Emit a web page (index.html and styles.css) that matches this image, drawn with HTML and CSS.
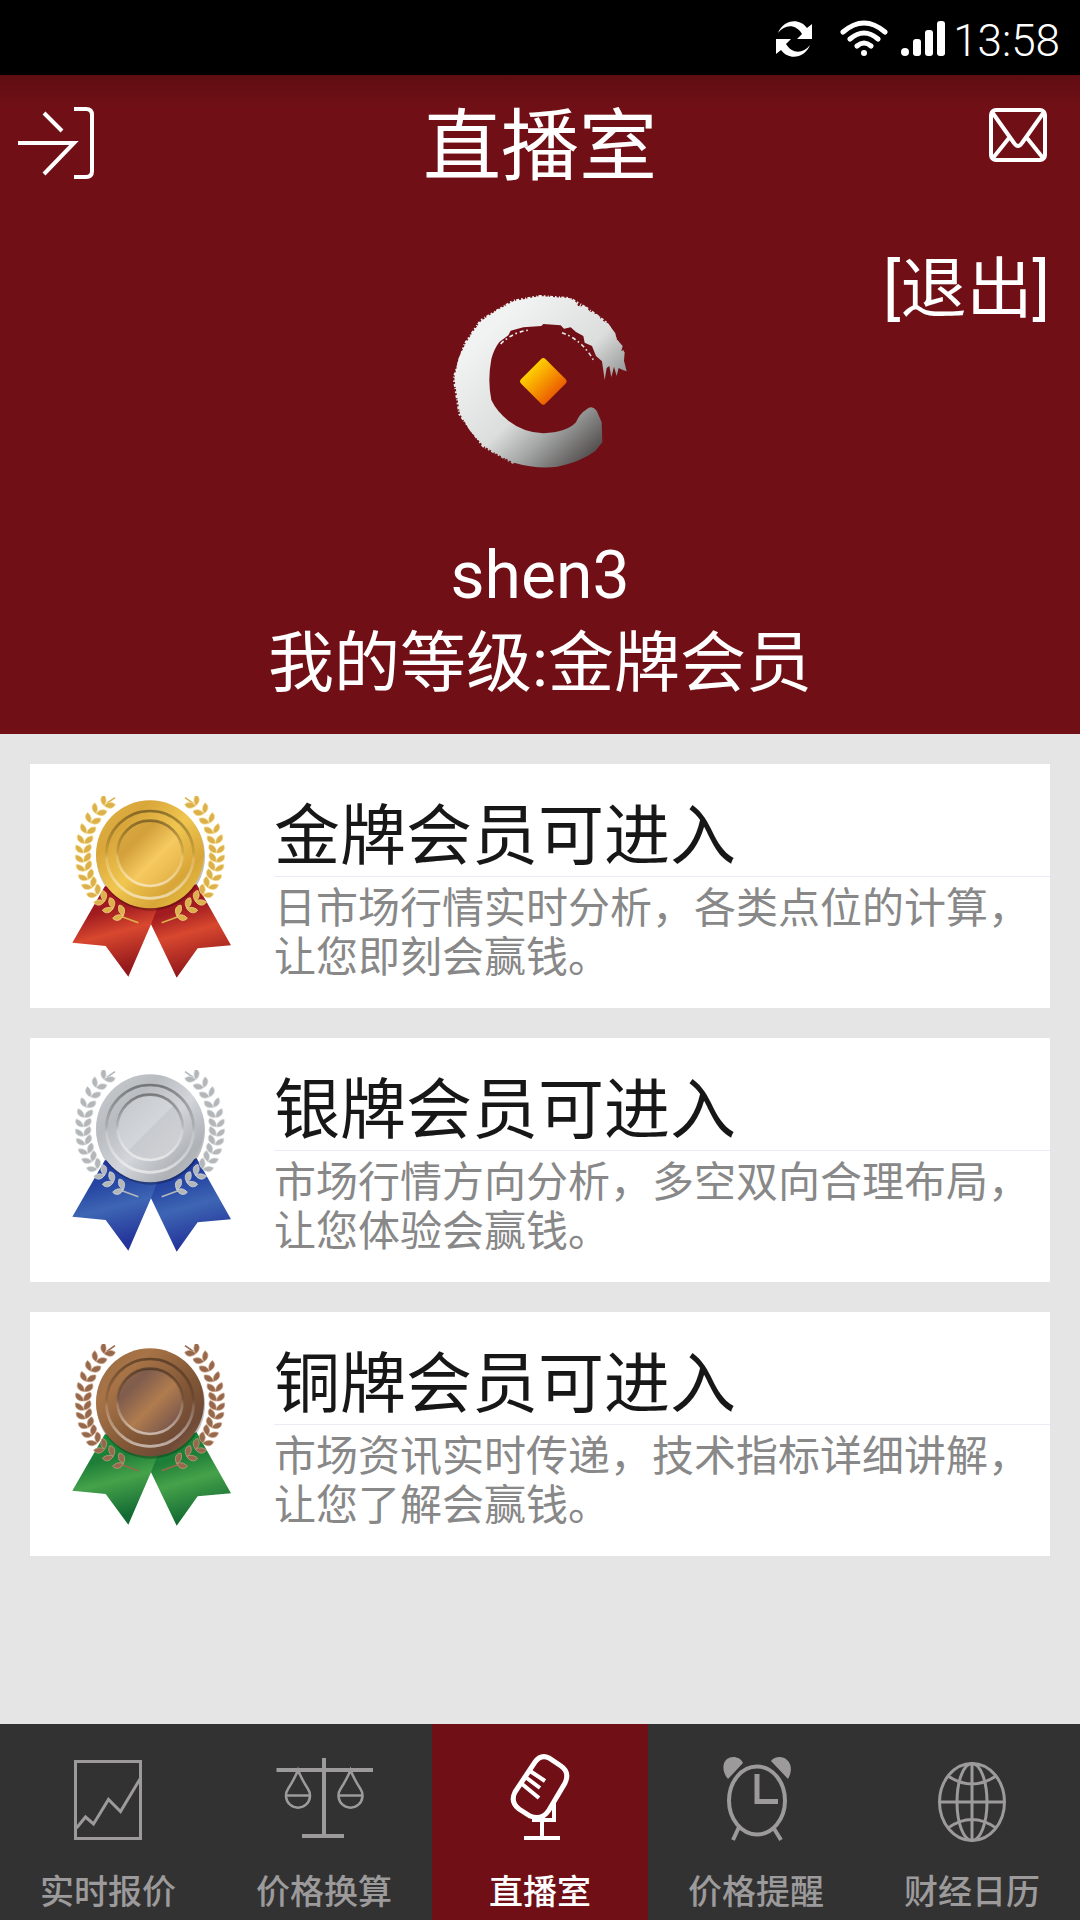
FILE: index.html
```html
<!DOCTYPE html>
<html lang="zh-CN">
<head>
    <meta charset="UTF-8">
    <meta name="viewport" content="width=device-width, initial-scale=1">
    <title>直播室</title>
    <link rel="stylesheet" href="styles.css">
</head>
<body>
    <!-- shared medal drawing, coloured per card -->
    <svg class="defs" width="0" height="0" aria-hidden="true">
        <defs>
            <linearGradient id="gold" x1="0" y1="0" x2="1" y2="1">
                <stop offset="0" stop-color="#e0b548"/><stop offset=".25" stop-color="#d9a63a"/>
                <stop offset=".5" stop-color="#f0c650"/><stop offset=".75" stop-color="#d8a638"/><stop offset="1" stop-color="#eccb45"/>
            </linearGradient>
            <linearGradient id="gold-face" x1="0" y1="0" x2="1" y2="1">
                <stop offset="0" stop-color="#dcae42"/><stop offset=".3" stop-color="#d3a03b"/>
                <stop offset=".58" stop-color="#f6ca60"/><stop offset="1" stop-color="#dca93d"/>
            </linearGradient>
            <linearGradient id="silver" x1="0" y1="0" x2="1" y2="1">
                <stop offset="0" stop-color="#c9cccf"/><stop offset=".3" stop-color="#b9bdc1"/>
                <stop offset=".55" stop-color="#d2d5d9"/><stop offset=".8" stop-color="#aeb2b6"/><stop offset="1" stop-color="#c6c9cc"/>
            </linearGradient>
            <linearGradient id="silver-face" x1="0" y1="0" x2="1" y2="1">
                <stop offset="0" stop-color="#c2c5c9"/><stop offset=".5" stop-color="#d3d6da"/>
                <stop offset=".52" stop-color="#c8cbcf"/><stop offset="1" stop-color="#d0d2d6"/>
            </linearGradient>
            <linearGradient id="bronze" x1="0" y1="0" x2="1" y2="1">
                <stop offset="0" stop-color="#94683f"/><stop offset=".25" stop-color="#a87447"/>
                <stop offset=".6" stop-color="#805636"/><stop offset=".8" stop-color="#6f4a36"/><stop offset="1" stop-color="#a06f45"/>
            </linearGradient>
            <linearGradient id="bronze-face" x1="0" y1="0" x2="1" y2="1">
                <stop offset="0" stop-color="#946843"/><stop offset=".25" stop-color="#7f5c4d"/>
                <stop offset=".55" stop-color="#b07c4e"/><stop offset=".85" stop-color="#7d594c"/><stop offset="1" stop-color="#8c6042"/>
            </linearGradient>
            <linearGradient id="red" x1="0" y1="0" x2=".25" y2="1">
                <stop offset="0" stop-color="#a80f22"/><stop offset=".35" stop-color="#a11c20"/>
                <stop offset=".6" stop-color="#d8482f"/><stop offset="1" stop-color="#94181c"/>
            </linearGradient>
            <linearGradient id="blue" x1="0" y1="0" x2=".25" y2="1">
                <stop offset="0" stop-color="#1c2c9c"/><stop offset=".35" stop-color="#2848a4"/>
                <stop offset=".6" stop-color="#3e66b4"/><stop offset="1" stop-color="#24349a"/>
            </linearGradient>
            <linearGradient id="green" x1="0" y1="0" x2=".25" y2="1">
                <stop offset="0" stop-color="#12953c"/><stop offset=".35" stop-color="#1d7d37"/>
                <stop offset=".6" stop-color="#46a24a"/><stop offset="1" stop-color="#136a32"/>
            </linearGradient>
            <linearGradient id="ring-line" x1="0" y1="0" x2="0" y2="1">
                <stop offset="0" stop-color="#000" stop-opacity=".38"/><stop offset=".45" stop-color="#000" stop-opacity=".1"/>
                <stop offset=".55" stop-color="#fff" stop-opacity=".15"/><stop offset="1" stop-color="#fff" stop-opacity=".55"/>
            </linearGradient>
            <g id="leaf">
                <path d="M0 11C-4-1-10-9-25-11C-29 4-17 14 0 11Z"/>
                <path d="M0 11C-3-4 5-13 18-17C27-4 17 9 0 11Z"/>
            </g>
            <g id="branch">
                <path class="stem" d="M199 380L150 362M104 22L129 5"/>
                <use href="#leaf" transform="translate(105 22) rotate(48)"/>
                <use href="#leaf" transform="translate(80 45) rotate(42)"/>
                <use href="#leaf" transform="translate(62 72) rotate(32)"/>
                <use href="#leaf" transform="translate(48 102) rotate(22)"/>
                <use href="#leaf" transform="translate(40 132) rotate(13)"/>
                <use href="#leaf" transform="translate(36 160) rotate(5)"/>
                <use href="#leaf" transform="translate(36 187) rotate(-2)"/>
                <use href="#leaf" transform="translate(39 213) rotate(-8)"/>
                <use href="#leaf" transform="translate(46 240) rotate(-17)"/>
                <use href="#leaf" transform="translate(56 265) rotate(-26)"/>
                <use href="#leaf" transform="translate(70 288) rotate(-35)"/>
                <use href="#leaf" transform="translate(90 308) rotate(-46)"/>
                <use href="#leaf" transform="translate(115 330) rotate(-52)"/>
                <use href="#leaf" transform="translate(145 352) rotate(-56)"/>
            </g>
            <symbol id="medal" viewBox="0 0 480 549">
                <path class="ribbon" d="M374 265L477 448L377 457L314 545L237 385L225 300Z"/>
                <path class="ribbon" d="M99 270L1 440L101 450L169 542L237 385L262 320Z"/>
                <circle class="shade" cx="236" cy="181" r="163"/>
                <circle class="disc" cx="234" cy="175" r="162"/>
                <circle class="groove" cx="234" cy="176" r="131"/>
                <circle class="face" cx="234" cy="172" r="98"/>
                <circle class="groove" cx="234" cy="172" r="98"/>
                <g class="laurel">
                    <use href="#branch"/>
                    <use href="#branch" transform="translate(468 0) scale(-1 1)"/>
                </g>
            </symbol>
        </defs>
    </svg>

    <div class="status-bar">
        <svg width="38" height="36" viewBox="0 0 38 36" fill="#fff">
            <path d="M3 12C8-1 24-4 32 7L37 3V18H22L27 13C21 3 10 3 3 12Z"/>
            <path d="M35 24C30 37 14 40 6 29L1 33V18H16L11 23C17 33 28 33 35 24Z"/>
        </svg>
        <svg class="wifi" width="48" height="37" viewBox="0 0 48 37" fill="none" stroke="#fff" stroke-width="5" stroke-linecap="round">
            <path d="M3 12Q24-6 45 12M10 19Q24 7 38 19M17 26Q24 20 31 26"/>
            <circle cx="24" cy="33" r="3" fill="#fff" stroke="none"/>
        </svg>
        <svg class="signal" width="44" height="36" viewBox="0 0 44 36" fill="#fff">
            <circle cx="4" cy="31" r="4"/>
            <rect x="12" y="18" width="8" height="17" rx="3"/>
            <rect x="24" y="9" width="8" height="26" rx="3"/>
            <rect x="36" y="0" width="8" height="35" rx="3"/>
        </svg>
        <span class="time">13:58</span>
    </div>

    <header>
        <div class="title-bar">
            <button class="icon-btn" type="button" aria-label="返回">
                <svg width="76" height="72" viewBox="0 0 76 72" fill="none" stroke="#fff" stroke-width="4">
                    <path d="M0 36H56L26 67M26 6L44 24M56 2H68Q74 2 74 8V64Q74 70 68 70H56"/>
                </svg>
            </button>
            <h1>直播室</h1>
            <button class="icon-btn mail" type="button" aria-label="消息">
                <svg width="58" height="56" viewBox="0 0 58 56" fill="none" stroke="#fff" stroke-width="4">
                    <rect x="2" y="3" width="54" height="50" rx="5"/>
                    <path d="M3 5L25 36Q29 42 33 36L55 5M4 51L20 31M54 51L38 31"/>
                </svg>
            </button>
        </div>

        <div class="profile">
            <svg class="logo" width="176" height="174" viewBox="36 40 528 522">
                <defs>
                    <linearGradient id="ink" gradientUnits="userSpaceOnUse" x1="150" y1="150" x2="480" y2="500">
                        <stop offset="0" stop-color="#f1f3f3"/><stop offset=".5" stop-color="#dcdddd"/>
                        <stop offset=".72" stop-color="#a3a6a5"/><stop offset="1" stop-color="#544f4f"/>
                    </linearGradient>
                    <linearGradient id="coin" x1="0" y1=".5" x2="1" y2=".5">
                        <stop offset="0" stop-color="#ffcf00"/><stop offset="1" stop-color="#ec5f00"/>
                    </linearGradient>
                </defs>
                <path fill="url(#ink)" d="M560 272L552 240L554 214L544 210L548 196L530 176L526 158L504 128L484 118L476 104L448 92L440 78L414 76L408 64L388 52L346 50L300 46L270 52L220 62L172 88L124 120L100 152L76 190L56 232L43 292L50 340L60 400L90 450L130 495L172 521L222 546Q290 566 352 558Q420 545 465 512L487 485L485 425L470 390Q455 372 440 386Q418 400 408 425Q380 455 310 458Q250 455 205 420Q170 392 154 358Q142 300 154 235Q162 205 178 184L205 164L212 150L250 140L304 136L310 130L362 134L372 144L392 140L408 154L430 166L434 186L456 196L468 226L486 242L494 298L500 262L508 256L514 290L522 258L530 286L536 262L548 268Z"/>
                <path fill="none" stroke="url(#ink)" stroke-width="10" stroke-dasharray="5 6 9 4 3 7" d="M548 215L500 128L440 84L388 54L300 48L220 62L124 120L76 190L43 292L60 400L130 495L222 546"/>
                <path fill="none" stroke="url(#ink)" stroke-width="5" stroke-dasharray="12 8 5 9" d="M182 190Q220 152 272 148M366 156Q430 180 462 242"/>
                <rect x="258" y="250" width="104" height="104" rx="10" fill="url(#coin)" transform="rotate(45 310 302)"/>
            </svg>
            <button class="logout" type="button">[退出]</button>
            <p class="name">shen3</p>
            <p class="level">我的等级:金牌会员</p>
        </div>
    </header>

    <main>
        <a class="card gold" href="#gold-room">
            <svg class="medal" width="160" height="183"><use href="#medal"/></svg>
            <div class="card-text">
                <h2>金牌会员可进入</h2>
                <p>日市场行情实时分析，各类点位的计算，让您即刻会赢钱。</p>
            </div>
        </a>
        <a class="card silver" href="#silver-room">
            <svg class="medal" width="160" height="183"><use href="#medal"/></svg>
            <div class="card-text">
                <h2>银牌会员可进入</h2>
                <p>市场行情方向分析，多空双向合理布局，让您体验会赢钱。</p>
            </div>
        </a>
        <a class="card bronze" href="#bronze-room">
            <svg class="medal" width="160" height="183"><use href="#medal"/></svg>
            <div class="card-text">
                <h2>铜牌会员可进入</h2>
                <p>市场资讯实时传递，技术指标详细讲解，让您了解会赢钱。</p>
            </div>
        </a>
    </main>

    <nav>
        <a href="#quotes">
            <svg width="110" height="90" viewBox="0 0 110 90" stroke-width="3">
                <rect x="22.5" y="9.5" width="65" height="77"/>
                <path d="M23.5 76L32.5 65L40.5 72L55.5 47.5L67.5 59.5L87 27"/>
            </svg>
            <span>实时报价</span>
        </a>
        <a href="#convert">
            <svg width="110" height="90" viewBox="0 0 110 90" stroke-width="4">
                <path d="M7.5 18H104M55 6V84M33 84H75"/>
                <path stroke-width="2.5" d="M29 18Q26 26 19 37A12 12 0 1 0 39 37Q32 26 29 18ZM17 43.5H41M81.5 18Q78.5 26 71.5 37A12 12 0 1 0 91.5 37Q84.5 26 81.5 18ZM69.5 43.5H93.5"/>
            </svg>
            <span>价格换算</span>
        </a>
        <a class="active" href="#live">
            <svg width="110" height="90" viewBox="0 0 110 90" stroke-width="4">
                <path stroke-width="5" d="M50 10Q56 2 64 6L76 14Q85 20 80 31L64 58Q57 69 45 64L34 57Q25 50 30 40Z"/>
                <path d="M45 19L60 29M41 25.5L55 36M37 32L54 46M69 50V68H47M57 68V86M39 86H75"/>
            </svg>
            <span>直播室</span>
        </a>
        <a href="#alerts">
            <svg width="110" height="90" viewBox="0 0 110 90" stroke-width="4">
                <ellipse cx="56" cy="48.5" rx="28" ry="34"/>
                <path stroke-width="5" d="M56 22V49.5H77"/>
                <path d="M38 75L32 88M72 75L80 88"/>
                <path fill="currentColor" stroke="none" d="M27 27C21 20 21 11 26 7C31 3 40 5 42 11ZM87 27C91 20 91 12 86 8C81 3 73 5 70 9Z"/>
            </svg>
            <span>价格提醒</span>
        </a>
        <a href="#calendar">
            <svg width="110" height="90" viewBox="0 0 110 90" stroke-width="3">
                <ellipse cx="55" cy="50" rx="32.5" ry="38.5"/>
                <ellipse cx="55" cy="50" rx="15" ry="38.5"/>
                <path d="M55 11V89M22 50H88M31 24Q55 40 79 24M31 76Q55 59 79 76"/>
            </svg>
            <span>财经日历</span>
        </a>
    </nav>
</body>
</html>
```
FILE: styles.css
```css
* {
    box-sizing: border-box;
}

body {
    margin: 0;
    min-height: 100vh;
    display: flex;
    flex-direction: column;
    background: #e5e5e5;
    font-family: Roboto, "Noto Sans CJK SC", sans-serif;
}

h1, h2, p {
    margin: 0;
    font-weight: normal;
}

a {
    color: inherit;
    text-decoration: none;
}

button {
    padding: 0;
    border: 0;
    background: none;
    color: inherit;
    font-family: inherit;
    cursor: pointer;
}

svg {
    display: block;
    flex: none;
}

.defs {
    position: absolute;
}

/* status bar */
.status-bar {
    display: flex;
    justify-content: flex-end;
    align-items: center;
    height: 75px;
    padding: 2px 20px 0 0;
    background: #000;
    color: #fff;
}

.wifi {
    margin: 0 13px 0 27px;
}

.signal {
    margin-right: 8px;
}

.time {
    padding-top: 4px;
    font-size: 44px;
    font-weight: 300;
    line-height: 48px;
}

/* header */
header {
    background: linear-gradient(#5f0d12, #701016 32px);
    color: #fff;
    padding-bottom: 26px;
}

.title-bar {
    display: grid;
    grid-template-columns: 1fr auto 1fr;
    align-items: start;
    padding: 32px 18px 0;
}

.title-bar h1 {
    font-size: 78px;
    line-height: 82px;
}

.icon-btn {
    justify-self: start;
}

.mail {
    justify-self: end;
    margin-right: 15px;
}

.profile {
    display: grid;
    grid-template-columns: 1fr auto 1fr;
    padding: 61px 30px 0;
    font-size: 66px;
    line-height: 88px;
    text-align: center;
}

.logo {
    grid-column: 2;
    justify-self: center;
    margin: 44px 0 64px;
}

.logout {
    grid-column: 3;
    justify-self: end;
    align-self: start;
    font-size: 66px;
    line-height: 80px;
}

.name, .level {
    grid-column: 1 / -1;
}

/* room cards */
main {
    flex: 1;
    display: flex;
    flex-direction: column;
    gap: 30px;
    padding: 30px;
}

.card {
    display: flex;
    align-items: flex-start;
    gap: 42px;
    padding: 32px 0 26px 42px;
    background: #fff;
}

.card-text {
    flex: 1;
}

.card h2 {
    padding-top: 2px;
    color: #171717;
    font-size: 66px;
    line-height: 78px;
    border-bottom: 1px solid #ececf8;
}

.card p {
    padding-top: 7px;
    color: #888;
    font-size: 42px;
    line-height: 49px;
}

.gold {
    --disc: url(#gold);
    --face: url(#gold-face);
    --ribbon: url(#red);
    --leaf: #dcb04a;
    --vein: #f3dc8a;
}

.silver {
    --disc: url(#silver);
    --face: url(#silver-face);
    --ribbon: url(#blue);
    --leaf: #b3b7ba;
    --vein: #dcdedd;
}

.bronze {
    --disc: url(#bronze);
    --face: url(#bronze-face);
    --ribbon: url(#green);
    --leaf: #96684c;
    --vein: #c9a083;
}

.ribbon {
    fill: var(--ribbon);
}

.shade {
    fill: #000;
    opacity: 0.25;
}

.disc {
    fill: var(--disc);
}

.face {
    fill: var(--face);
}

.groove {
    fill: none;
    stroke: url(#ring-line);
    stroke-width: 8px;
}

.laurel {
    fill: var(--leaf);
    stroke: var(--vein);
    stroke-width: 2px;
}

.stem {
    fill: none;
    stroke: var(--leaf);
    stroke-width: 5px;
}

/* bottom tabs */
nav {
    display: grid;
    grid-template-columns: repeat(5, 1fr);
    background: #323232;
    color: #9c9a9b;
}

nav a {
    display: flex;
    flex-direction: column;
    align-items: center;
    gap: 25px;
    padding: 28px 0 3px;
    font-size: 34px;
    font-weight: 500;
    line-height: 50px;
}

nav svg {
    fill: none;
    stroke: currentColor;
}

nav .active {
    background: #701016;
    color: #fff;
}
```
